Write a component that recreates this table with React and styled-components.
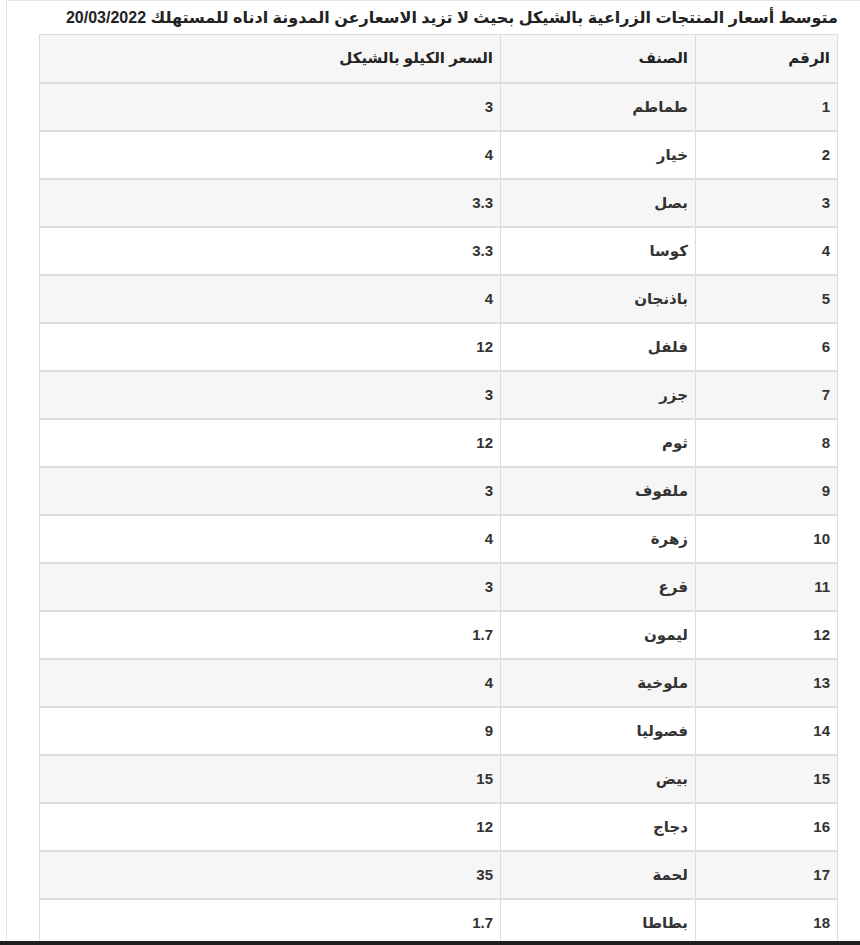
import React from "react";
import styled, { createGlobalStyle } from "styled-components";

const GlobalStyle = createGlobalStyle`
  html, body {
    margin: 0;
    padding: 0;
    background: #fff;
  }
  body {
    font-family: "Liberation Sans", "DejaVu Sans", sans-serif;
    color: #333;
  }
`;

const rows = [
  ["1", "طماطم", "3"],
  ["2", "خيار", "4"],
  ["3", "بصل", "3.3"],
  ["4", "كوسا", "3.3"],
  ["5", "باذنجان", "4"],
  ["6", "فلفل", "12"],
  ["7", "جزر", "3"],
  ["8", "ثوم", "12"],
  ["9", "ملفوف", "3"],
  ["10", "زهرة", "4"],
  ["11", "قرع", "3"],
  ["12", "ليمون", "1.7"],
  ["13", "ملوخية", "4"],
  ["14", "فصوليا", "9"],
  ["15", "بيض", "15"],
  ["16", "دجاج", "12"],
  ["17", "لحمة", "35"],
  ["18", "بطاطا", "1.7"],
];

const Page = styled.div`
  margin-left: 6px;
  border-left: 1px solid #e6e6e6;
  border-top: 1px solid #e6e6e6;
  height: 944px;
  overflow: hidden;
  box-sizing: border-box;
  padding: 0 22px 0 33px;
  direction: rtl;
`;

const Title = styled.h3`
  margin: 0;
  height: 33px;
  display: flex;
  align-items: center;
  font-size: 16px;
  font-weight: bold;
  color: #222;
  white-space: nowrap;
`;

const Table = styled.table`
  width: 798px;
  border-collapse: collapse;
  table-layout: fixed;
  border: 1px solid #ddd;
  font-size: 15px;
`;

const Row = styled.tr`
  background: ${(p) => (p.$striped ? "#f6f6f6" : "#fff")};
`;

const Cell = styled.td`
  height: 48px;
  padding: 0 7px;
  text-align: right;
  font-weight: bold;
  color: #333;
  border-left: 1px solid #ddd;
  border-right: 1px solid #ddd;
  border-top: 2px solid #ddd;
  border-bottom: 2px solid #ddd;
  width: ${(p) => p.$w}px;
  box-sizing: border-box;
`;

const HeadCell = styled(Cell).attrs({ as: "th" })`
  color: #222;
  border-top: 0;
`;

const BottomBar = styled.div`
  position: fixed;
  left: 0;
  right: 0;
  bottom: 0;
  height: 4px;
  background: #1e1e1e;
`;

const widths = [142, 195, 461];

export default function App() {
  return (
    <>
      <GlobalStyle />
      <Page>
        <Title>
          متوسط أسعار المنتجات الزراعية بالشيكل بحيث لا تزيد الاسعارعن المدونة ادناه للمستهلك 20/03/2022
        </Title>
        <Table>
          <thead>
            <Row $striped>
              <HeadCell $w={widths[0]}>الرقم</HeadCell>
              <HeadCell $w={widths[1]}>الصنف</HeadCell>
              <HeadCell $w={widths[2]}>السعر الكيلو بالشيكل</HeadCell>
            </Row>
          </thead>
          <tbody>
            {rows.map((r, i) => (
              <Row key={r[0]} $striped={i % 2 === 0}>
                <Cell>{r[0]}</Cell>
                <Cell>{r[1]}</Cell>
                <Cell>{r[2]}</Cell>
              </Row>
            ))}
          </tbody>
        </Table>
      </Page>
      <BottomBar />
    </>
  );
}
